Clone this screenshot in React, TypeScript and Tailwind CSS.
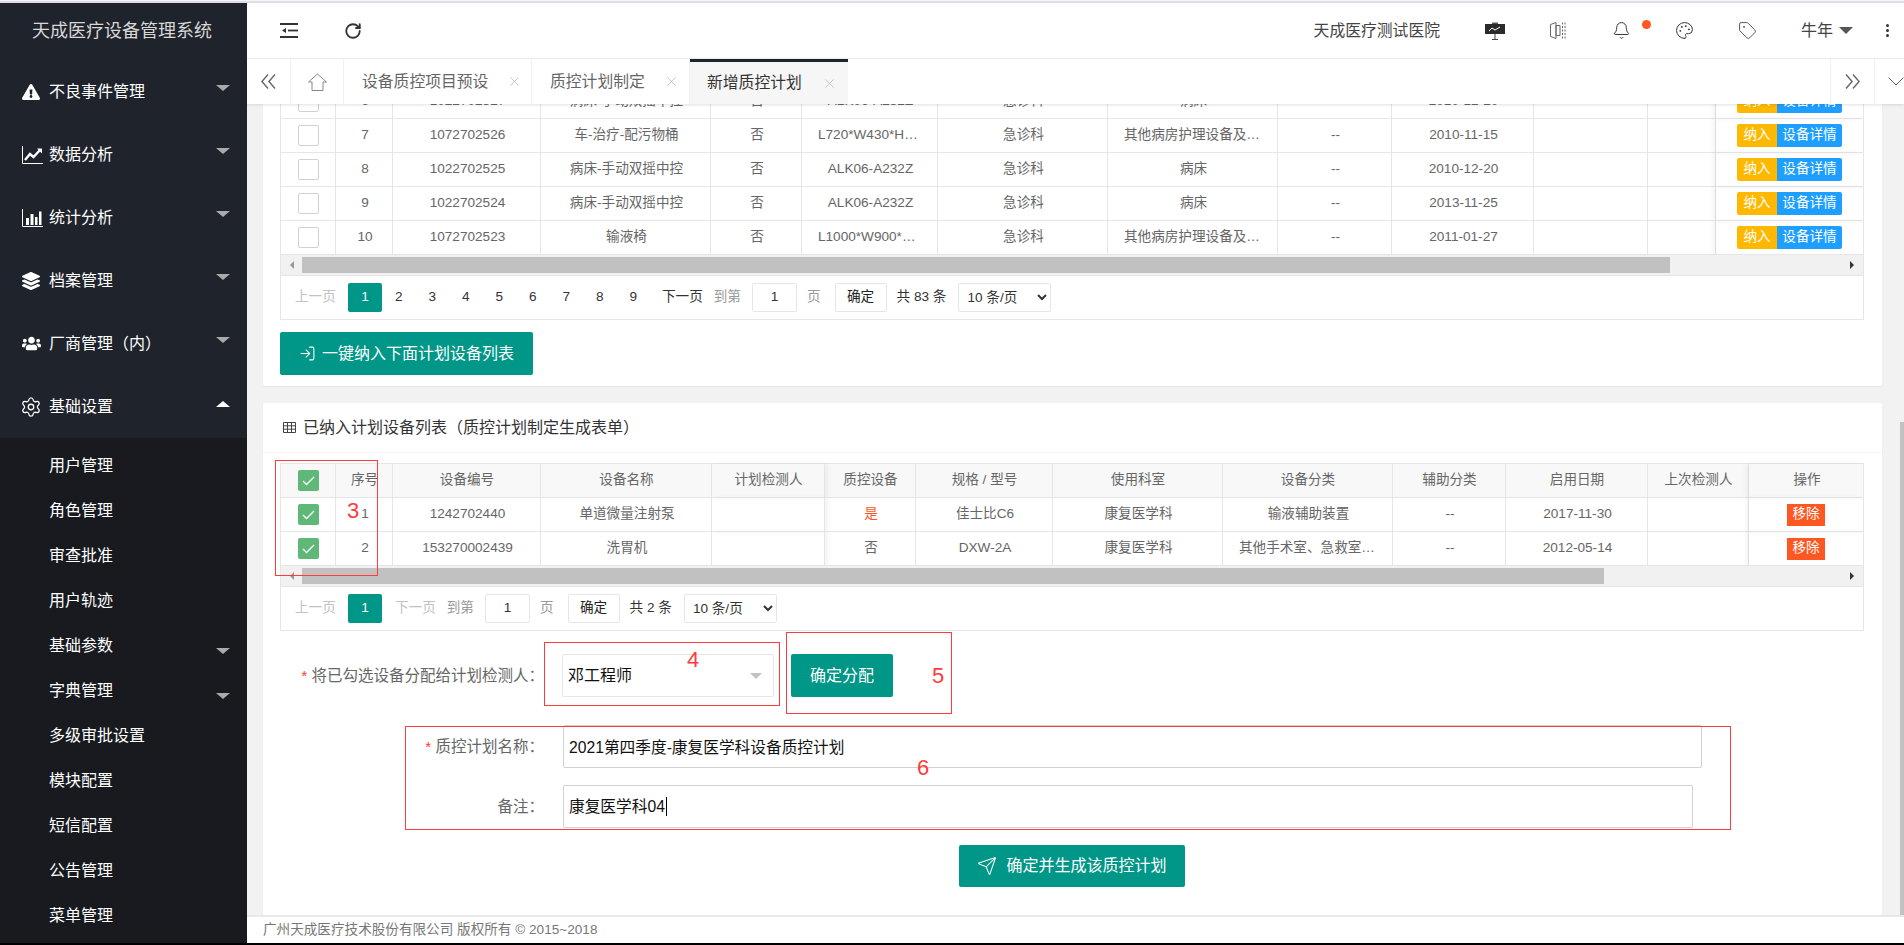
import { Bell, LogIn, Palette, RotateCw, Send, Settings, Tag, X } from "lucide-react";
import { FaExclamationTriangle, FaLayerGroup, FaUsers } from "react-icons/fa";

const firstCols = ["w-[55px]", "w-[57px]", "w-[148px]", "w-[170px]", "w-[91px]", "w-[136px]", "w-[170px]", "w-[170px]", "w-[114px]", "w-[142px]", "w-[114px]", "w-[68px]", "w-[148px]"];
const secondCols = ["w-[55px]", "w-[57px]", "w-[148px]", "w-[171px]", "w-[113px]", "w-[91px]", "w-[137px]", "w-[170px]", "w-[170px]", "w-[113px]", "w-[142px]", "w-[101px]", "w-[115px]"];

const firstRows = [
  ["6", "1022702527", "病床-手动双摇中控", "否", "ALK06-A232Z", "急诊科", "病床", "--", "2010-12-20"],
  ["7", "1072702526", "车-治疗-配污物桶", "否", "L720*W430*H850", "急诊科", "其他病房护理设备及器具", "--", "2010-11-15"],
  ["8", "1022702525", "病床-手动双摇中控", "否", "ALK06-A232Z", "急诊科", "病床", "--", "2010-12-20"],
  ["9", "1022702524", "病床-手动双摇中控", "否", "ALK06-A232Z", "急诊科", "病床", "--", "2013-11-25"],
  ["10", "1072702523", "输液椅", "否", "L1000*W900*H800", "急诊科", "其他病房护理设备及器具", "--", "2011-01-27"],
];

const secondHead = ["序号", "设备编号", "设备名称", "计划检测人", "质控设备", "规格 / 型号", "使用科室", "设备分类", "辅助分类", "启用日期", "上次检测人"];
const secondRows = [
  ["1", "1242702440", "单道微量注射泵", "", "是", "佳士比C6", "康复医学科", "输液辅助装置", "--", "2017-11-30", ""],
  ["2", "153270002439", "洗胃机", "", "否", "DXW-2A", "康复医学科", "其他手术室、急救室及诊疗室设备", "--", "2012-05-14", ""],
];

const menus = [
  { label: "不良事件管理", icon: <FaExclamationTriangle size={18} /> },
  { label: "数据分析", icon: <LineChartIcon /> },
  { label: "统计分析", icon: <BarChartIcon /> },
  { label: "档案管理", icon: <FaLayerGroup size={18} /> },
  { label: "厂商管理（内）", icon: <FaUsers size={19} /> },
];

const subMenus = [
  { label: "用户管理" },
  { label: "角色管理" },
  { label: "审查批准" },
  { label: "用户轨迹" },
  { label: "基础参数", more: true },
  { label: "字典管理", more: true },
  { label: "多级审批设置" },
  { label: "模块配置" },
  { label: "短信配置" },
  { label: "公告管理" },
  { label: "菜单管理" },
];

function LineChartIcon() {
  return (
    <svg width="21" height="18" viewBox="0 0 21 18" fill="none">
      <path d="M.5 0v17.5H21" stroke="currentColor" />
      <path d="M3 14l5-6 3.5 3L18 4" stroke="currentColor" strokeWidth="2.4" />
      <path d="M15 2.5h5v5z" fill="currentColor" />
    </svg>
  );
}

function BarChartIcon() {
  return (
    <svg width="21" height="18" viewBox="0 0 21 18" fill="none">
      <path d="M.5 0v17.5H21" stroke="currentColor" />
      <path d="M4 9h3v7H4zM8.500 5h3v11h-3zM13 8h2.500v8H13zM17 2.500h2.500V16H17z" fill="currentColor" />
    </svg>
  );
}

function Caret({ up }: { up?: boolean }) {
  return (
    <span
      className={
        "block h-0 w-0 border-x-[7px] border-x-transparent " +
        (up ? "border-b-[6px] border-b-white" : "border-t-[6px] border-t-[#aaaaaa]")
      }
    />
  );
}

function Sidebar() {
  return (
    <aside className="flex h-full w-[247px] shrink-0 flex-col overflow-hidden bg-[#1f232b] text-white">
      <div className="flex h-[57px] shrink-0 items-center pl-8 text-[18px] text-[#d8d8d8]">天成医疗设备管理系统</div>
      <nav>
        {menus.map((m) => (
          <div key={m.label} className="relative flex h-[63px] items-center pl-[22px] text-[16px]">
            <span className="flex w-[27px] justify-start">{m.icon}</span>
            {m.label}
            <span className="absolute right-[17px] top-[25px]">
              <Caret />
            </span>
          </div>
        ))}
        <div className="relative flex h-[63px] items-center pl-[20px] text-[16px]">
          <span className="flex w-[29px] justify-start">
            <Settings size={22} strokeWidth={1.4} />
          </span>
          基础设置
          <span className="absolute right-[17px] top-[26px]">
            <Caret up />
          </span>
        </div>
      </nav>
      <ul className="flex-1 bg-[#181a20] pt-[5px]">
        {subMenus.map((s) => (
          <li key={s.label} className="relative flex h-[45px] items-center pl-[49px] text-[16px]">
            {s.label}
            {s.more && (
              <span className="absolute right-[17px] top-[25px]">
                <Caret />
              </span>
            )}
          </li>
        ))}
      </ul>
    </aside>
  );
}

function Header() {
  return (
    <header className="flex h-[56px] shrink-0 items-center border-b border-[#f0f0f0] bg-white text-[#444]">
      <svg className="ml-[33px]" width="18" height="15" viewBox="0 0 18 15" fill="none">
        <path d="M0 1h18M0 14h18" stroke="#333" strokeWidth="2" />
        <path d="M8 7.500h10" stroke="#333" strokeWidth="1.800" />
        <path d="M2 7.500L6 5v5z" fill="#333" />
      </svg>
      <RotateCw className="ml-[46px]" size={18} strokeWidth={2.4} color="#333" />
      <div className="ml-auto flex items-center">
        <span className="mr-6 text-[15.8px]">天成医疗测试医院</span>
        <span className="flex w-[63px] justify-center">
          <svg width="20" height="18" viewBox="0 0 20 18" fill="none">
            <path d="M7 1.500h6" stroke="#555" strokeWidth="2" />
            <rect y="2" width="20" height="10" fill="#2b2b2b" />
            <path d="M4 9l3-3 3 2 5-3" stroke="#fff" />
            <path d="M10 12v5M7 17.500h6" stroke="#444" />
          </svg>
        </span>
        <span className="flex w-[63px] justify-center">
          <svg width="16" height="18" viewBox="0 0 16 18" fill="none" stroke="#666">
            <path d="M.5 2.500L6 .5v16l-5.500-2zM6 3.500h4v10H6z" />
            <path d="M12.500.5v16M15 .5v16" strokeDasharray="2 1.500" />
          </svg>
        </span>
        <span className="relative flex w-[63px] justify-center">
          <Bell size={19} strokeWidth={1.25} color="#333" />
          <span className="absolute left-[52px] top-[-1px] h-[9px] w-[9px] rounded-full bg-[#ff5722]" />
        </span>
        <span className="flex w-[63px] justify-center">
          <Palette size={19} strokeWidth={1.25} color="#333" />
        </span>
        <span className="flex w-[63px] justify-center">
          <Tag size={19} strokeWidth={1.25} color="#555" />
        </span>
        <span className="ml-[22px] text-[16px]">牛年</span>
        <span className="ml-[6px] h-0 w-0 border-x-[7px] border-t-[7px] border-x-transparent border-t-[#555]" />
        <span className="ml-[33px] mr-[15px] flex flex-col gap-[2px]">
          <i className="block h-[3px] w-[3px] rounded-full bg-[#333]" />
          <i className="block h-[3px] w-[3px] rounded-full bg-[#333]" />
          <i className="block h-[3px] w-[3px] rounded-full bg-[#333]" />
        </span>
      </div>
    </header>
  );
}

function TabClose({ className }: { className: string }) {
  return <X className={className} size={15} strokeWidth={1} color="#a8a8a8" />;
}

function Tabs() {
  return (
    <div className="relative z-10 flex h-[45px] shrink-0 items-stretch bg-white text-[15.8px] text-[#666] shadow-[0_1px_3px_rgba(0,0,0,0.12)]">
      <div className="flex w-[44px] items-center justify-center border-r border-[#f0f0f0]">
        <svg width="15" height="15" viewBox="0 0 15 15" fill="none" stroke="#666" strokeWidth="1.400">
          <path d="M7 .5L.9 7.500 7 14.500M14 .5L7.900 7.500 14 14.500" />
        </svg>
      </div>
      <div className="flex w-[53px] items-center justify-center border-r border-[#f0f0f0]">
        <svg width="19" height="18" viewBox="0 0 19 18" fill="none" stroke="#888">
          <path d="M.5 9L9.500 1l9 8h-3.500v8.500H4V9z" />
        </svg>
      </div>
      <div className="flex w-[188px] items-center border-r border-[#f0f0f0] pl-[18px]">
        设备质控项目预设
        <TabClose className="ml-[19px]" />
      </div>
      <div className="flex w-[158px] items-center border-r border-[#f0f0f0] pl-[18px]">
        质控计划制定
        <TabClose className="ml-[19px]" />
      </div>
      <div className="flex w-[158px] items-center border-t-[3px] border-[#1f232b] bg-[#f6f6f6] pl-[17px] text-[#333]">
        新增质控计划
        <TabClose className="ml-[20px]" />
      </div>
      <div className="ml-auto flex w-[45px] items-center justify-center border-x border-[#f0f0f0]">
        <svg width="15" height="15" viewBox="0 0 15 15" fill="none" stroke="#666" strokeWidth="1.400">
          <path d="M8 .5l6.100 7-6.100 7M1 .5l6.100 7-6.100 7" />
        </svg>
      </div>
      <div className="flex w-[29px] items-center justify-end">
        <svg width="16" height="9" viewBox="0 0 16 9" fill="none" stroke="#666">
          <path d="M.5.5L8 8l7.500-7.500" />
        </svg>
      </div>
    </div>
  );
}

function CheckBox({ checked }: { checked?: boolean }) {
  return (
    <span className={"mx-auto flex h-[21px] w-[21px] items-center justify-center rounded-[2px] " + (checked ? "bg-[#5fb878]" : "border border-[#d2d2d2] bg-white")}>
      {checked && (
        <svg width="13" height="10" viewBox="0 0 13 10" fill="none" stroke="#fff" strokeWidth="1.300">
          <path d="M1 5l3.500 3.500L12 1" />
        </svg>
      )}
    </span>
  );
}

const cell = "h-[34px] truncate border-b border-r border-[#e6e6e6] pl-[16px] pr-[14px] text-center font-normal";
const bare = "h-[34px] truncate border-b border-r border-[#e6e6e6] text-center font-normal";
const fixedRight = " shadow-[-3px_0_5px_rgba(0,0,0,0.05)]";
const fixedLeft = " shadow-[3px_0_5px_rgba(0,0,0,0.05)]";

function ScrollBar({ thumb }: { thumb: string }) {
  return (
    <div className="relative flex h-[20px] items-stretch border-l border-r border-[#e6e6e6] bg-[#f1f1f1] py-[2px]">
      <span className="absolute left-[9px] top-[6px] h-0 w-0 border-y-[4px] border-r-[4px] border-y-transparent border-r-[#999]" />
      <span className={"ml-[21px] bg-[#c1c1c1] " + thumb} />
      <span className="absolute right-[9px] top-[6px] h-0 w-0 border-y-[4px] border-l-[4px] border-y-transparent border-l-[#333]" />
    </div>
  );
}

function PagerTail({ total }: { total: string }) {
  return (
    <>
      <span className="ml-[11px] text-[#999]">到第</span>
      <span className="ml-[11px] flex h-[29px] w-[45px] items-center justify-center rounded-[2px] border border-[#e6e6e6] text-[#333]">1</span>
      <span className="ml-[10px] text-[#999]">页</span>
      <span className="ml-[14px] flex h-[29px] w-[52px] items-center justify-center rounded-[2px] border border-[#e6e6e6] text-[#222]">确定</span>
      <span className="ml-[10px] text-[#333]">共 {total} 条</span>
      <select defaultValue="10" className="ml-[12px] h-[29px] w-[93px] rounded-[2px] border border-[#e6e6e6] bg-white pl-1 text-[#333]">
        <option value="10">10 条/页</option>
        <option value="20">20 条/页</option>
      </select>
    </>
  );
}

function FirstTable() {
  return (
    <>
      <div className="border-l border-[#e6e6e6]">
        <table className="w-full table-fixed border-separate border-spacing-0 text-[13.6px] text-[#666]">
          <colgroup>
            {firstCols.map((c, i) => (
              <col key={i} className={c} />
            ))}
          </colgroup>
          <tbody>
            {firstRows.map((r) => (
              <tr key={r[0]}>
                <td className={bare}>
                  <CheckBox />
                </td>
                {r.map((v, i) => (
                  <td key={i} className={cell}>
                    {v}
                  </td>
                ))}
                <td className={cell} />
                <td className={cell} />
                <td className={bare + fixedRight}>
                  <span className="flex justify-center text-white">
                    <span className="flex h-[23px] w-[40px] items-center justify-center rounded-l-[2px] bg-[#ffb800]">纳入</span>
                    <span className="flex h-[23px] w-[65px] items-center justify-center rounded-r-[2px] bg-[#1e9fff]">设备详情</span>
                  </span>
                </td>
              </tr>
            ))}
          </tbody>
        </table>
      </div>
      <ScrollBar thumb="w-[1368px]" />
      <div className="flex h-[45px] items-center border border-[#e6e6e6] pl-[14px] text-[13.6px]">
        <span className="w-[41px] text-[#c2c2c2]">上一页</span>
        <span className="ml-[12px] flex h-[29px] w-[34px] items-center justify-center rounded-[2px] bg-[#009688] text-white">1</span>
        {["2", "3", "4", "5", "6", "7", "8", "9"].map((n) => (
          <span key={n} className="w-[33.5px] text-center text-[#333]">
            {n}
          </span>
        ))}
        <span className="ml-[12px] text-[#333]">下一页</span>
        <PagerTail total="83" />
      </div>
    </>
  );
}

function SecondTable() {
  return (
    <>
      <div className="border-l border-t border-[#e6e6e6]">
        <table className="w-full table-fixed border-separate border-spacing-0 text-[13.6px] text-[#666]">
          <colgroup>
            {secondCols.map((c, i) => (
              <col key={i} className={c} />
            ))}
          </colgroup>
          <thead className="bg-[#f8f8f8]">
            <tr>
              <th className={bare}>
                <CheckBox checked />
              </th>
              {secondHead.map((h, i) => (
                <th key={h} className={"pl-px " + bare + (i === 3 ? fixedLeft : "")}>
                  {h}
                </th>
              ))}
              <th className={cell + fixedRight}>操作</th>
            </tr>
          </thead>
          <tbody>
            {secondRows.map((r) => (
              <tr key={r[0]}>
                <td className={bare}>
                  <CheckBox checked />
                </td>
                {r.map((v, i) => (
                  <td key={i} className={cell + (v === "是" ? " text-[#ff5722]" : "") + (i === 3 ? fixedLeft : "")}>
                    {v}
                  </td>
                ))}
                <td className={bare + fixedRight}>
                  <span className="mx-auto flex h-[22px] w-[38px] items-center justify-center bg-[#ff5722] text-white">移除</span>
                </td>
              </tr>
            ))}
          </tbody>
        </table>
      </div>
      <ScrollBar thumb="w-[1302px]" />
      <div className="flex h-[45px] items-center border border-[#e6e6e6] pl-[14px] text-[13.6px]">
        <span className="w-[41px] text-[#c2c2c2]">上一页</span>
        <span className="ml-[12px] flex h-[29px] w-[34px] items-center justify-center rounded-[2px] bg-[#009688] text-white">1</span>
        <span className="ml-[13px] text-[#c2c2c2]">下一页</span>
        <PagerTail total="2" />
      </div>
    </>
  );
}

function PlanForm() {
  return (
    <div className="text-[15.5px] text-[#666]">
      <div className="mt-[23px] flex items-center">
        <label className="w-[281px] text-right">
          <span className="text-[#ff3b3b]">* </span>将已勾选设备分配给计划检测人：
        </label>
        <div className="ml-[18px] flex h-[43px] w-[212px] items-center justify-between rounded-[2px] border border-[#e6e6e6] pl-[5px] pr-[11px] text-[16px] text-[#111]">
          邓工程师
          <span className="h-0 w-0 border-x-[6px] border-t-[6px] border-x-transparent border-t-[#c2c2c2]" />
        </div>
        <button className="ml-[17px] h-[43px] w-[102px] rounded-[2px] bg-[#009688] text-[16px] text-white">确定分配</button>
      </div>
      <div className="mt-[28px] flex items-center">
        <label className="w-[281px] text-right">
          <span className="text-[#ff3b3b]">* </span>质控计划名称：
        </label>
        <input
          readOnly
          defaultValue="2021第四季度-康复医学科设备质控计划"
          className="ml-[19px] h-[43px] w-[1139px] rounded-[2px] border border-[#d2d2d2] pl-[5px] text-[15.7px] text-[#111] outline-none"
        />
      </div>
      <div className="mt-[17px] flex items-center">
        <label className="w-[281px] text-right">备注：</label>
        <div className="ml-[19px] flex h-[43px] w-[1130px] items-center rounded-[2px] border border-[#d2d2d2] pl-[5px] text-[15.7px] text-[#111]">
          康复医学科04
          <span className="ml-px h-[19px] w-px bg-black" />
        </div>
      </div>
      <button className="ml-[696px] mt-[17px] flex h-[42px] w-[226px] items-center justify-center gap-[9px] rounded-[2px] bg-[#009688] text-[16px] text-white">
        <Send size={20} strokeWidth={1.25} />
        确定并生成该质控计划
      </button>
    </div>
  );
}

function Annotations() {
  const box = "absolute border border-[#ff3b3b]";
  const num = "absolute text-[22px] leading-none text-[#ff3b3b]";
  return (
    <>
      <div className={box + " left-[275px] top-[460px] h-[116px] w-[103px]"} />
      <span className={num + " left-[347px] top-[500px]"}>3</span>
      <div className={box + " left-[544px] top-[642px] h-[64px] w-[236px]"} />
      <span className={num + " left-[687px] top-[649px]"}>4</span>
      <div className={box + " left-[786px] top-[632px] h-[82px] w-[166px]"} />
      <span className={num + " left-[932px] top-[665px]"}>5</span>
      <div className={box + " left-[405px] top-[726px] h-[104px] w-[1326px]"} />
      <span className={num + " left-[917px] top-[757px]"}>6</span>
    </>
  );
}

export default function App() {
  return (
    <div className="relative flex h-[945px] w-[1904px] flex-col overflow-hidden bg-white font-['Liberation_Sans','Noto_Sans_CJK_SC',sans-serif]">
      <div className="h-[3px] shrink-0 border-t border-[#f6f6f6] bg-[#dddde6]" />
      <div className="flex min-h-0 flex-1">
        <Sidebar />
        <div className="flex min-w-0 flex-1 flex-col">
          <Header />
          <Tabs />
          <main className="flex min-h-0 flex-1 overflow-hidden bg-[#f2f2f2]">
            <div className="mt-[-19px] min-w-0 flex-1 pl-4 pr-[18px]">
              <section className="rounded-[2px] bg-white pb-[11px] pl-[17px] pr-[18px] shadow-[0_1px_2px_rgba(0,0,0,0.05)]">
                <FirstTable />
                <button className="mt-[12px] flex h-[43px] w-[253px] items-center justify-center gap-[6px] rounded-[2px] bg-[#009688] text-[16px] text-white">
                  <LogIn size={17} strokeWidth={1.5} />
                  一键纳入下面计划设备列表
                </button>
              </section>
              <section className="mt-[17px] rounded-[2px] bg-white pb-[28px] shadow-[0_1px_2px_rgba(0,0,0,0.05)]">
                <div className="flex h-[50px] items-center gap-[7px] border-b border-[#f6f6f6] pl-[20px] text-[16px] text-[#333]">
                  <svg width="13" height="11" viewBox="0 0 13 11" fill="none" stroke="#444">
                    <path d="M.5.5h12v10H.5zM.5 3.800h12M.5 7.200h12M4.500.5v10M8.500.5v10" />
                  </svg>
                  已纳入计划设备列表（质控计划制定生成表单）
                </div>
                <div className="mt-[10px] pl-[17px] pr-[18px]">
                  <SecondTable />
                </div>
                <PlanForm />
              </section>
            </div>
            <div className="mt-[318px] w-1 bg-[#c1c1c1]" />
          </main>
          <footer className="flex h-[28px] shrink-0 items-center border-t-2 border-[#e8e8e8] bg-white pl-4 text-[13.6px] text-[#777]">
            广州天成医疗技术股份有限公司 版权所有 © 2015~2018
          </footer>
        </div>
      </div>
      <div className="h-[2px] shrink-0 bg-black" />
      <Annotations />
    </div>
  );
}
